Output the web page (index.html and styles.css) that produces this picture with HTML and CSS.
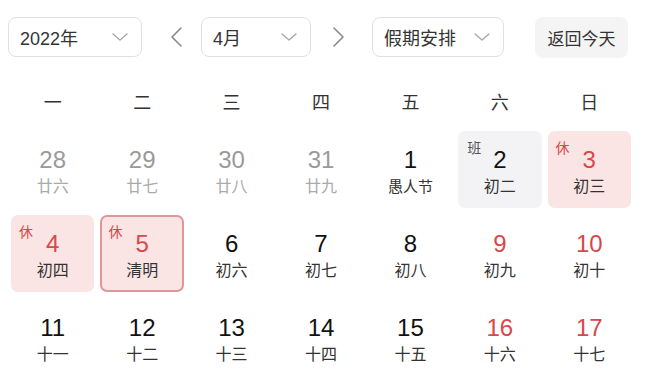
FILE: index.html
```html
<!DOCTYPE html>
<html lang="zh">
<head>
<meta charset="utf-8">
<link rel="stylesheet" href="styles.css">
</head>
<body>
<div class="cal">
  <div class="toolbar">
    <div class="select sel-year"><span>2022年</span><svg class="chev" viewBox="0 0 16 8" width="16" height="8"><path d="M1 1 L8 7 L15 1" /></svg></div>
    <svg class="arrow arrow-prev" viewBox="0 0 12 20" width="12" height="20"><path d="M11 1 L2 10 L11 19" /></svg>
    <div class="select sel-month"><span>4月</span><svg class="chev" viewBox="0 0 16 8" width="16" height="8"><path d="M1 1 L8 7 L15 1" /></svg></div>
    <svg class="arrow arrow-next" viewBox="0 0 12 20" width="12" height="20"><path d="M1 1 L10 10 L1 19" /></svg>
    <div class="select sel-holiday"><span>假期安排</span><svg class="chev" viewBox="0 0 16 8" width="16" height="8"><path d="M1 1 L8 7 L15 1" /></svg></div>
    <div class="today-btn">返回今天</div>
  </div>

  <div class="weekdays">
    <div>一</div><div>二</div><div>三</div><div>四</div><div>五</div><div>六</div><div>日</div>
  </div>

  <div class="grid">
    <div class="cell muted"><div class="num">28</div><div class="lunar">廿六</div></div>
    <div class="cell muted"><div class="num">29</div><div class="lunar">廿七</div></div>
    <div class="cell muted"><div class="num">30</div><div class="lunar">廿八</div></div>
    <div class="cell muted"><div class="num">31</div><div class="lunar">廿九</div></div>
    <div class="cell"><div class="num">1</div><div class="lunar fest">愚人节</div></div>
    <div class="cell work"><span class="tag">班</span><div class="num">2</div><div class="lunar">初二</div></div>
    <div class="cell rest"><span class="tag">休</span><div class="num red">3</div><div class="lunar">初三</div></div>

    <div class="cell rest"><span class="tag">休</span><div class="num red">4</div><div class="lunar">初四</div></div>
    <div class="cell rest selected"><span class="tag">休</span><div class="num red">5</div><div class="lunar">清明</div></div>
    <div class="cell"><div class="num">6</div><div class="lunar">初六</div></div>
    <div class="cell"><div class="num">7</div><div class="lunar">初七</div></div>
    <div class="cell"><div class="num">8</div><div class="lunar">初八</div></div>
    <div class="cell"><div class="num red">9</div><div class="lunar">初九</div></div>
    <div class="cell"><div class="num red">10</div><div class="lunar">初十</div></div>

    <div class="cell"><div class="num">11</div><div class="lunar">十一</div></div>
    <div class="cell"><div class="num">12</div><div class="lunar">十二</div></div>
    <div class="cell"><div class="num">13</div><div class="lunar">十三</div></div>
    <div class="cell"><div class="num">14</div><div class="lunar">十四</div></div>
    <div class="cell"><div class="num">15</div><div class="lunar">十五</div></div>
    <div class="cell"><div class="num red">16</div><div class="lunar">十六</div></div>
    <div class="cell"><div class="num red">17</div><div class="lunar">十七</div></div>
  </div>
</div>
</body>
</html>
```

FILE: styles.css
```css
html, body {
  margin: 0;
  padding: 0;
  background: #ffffff;
  overflow: hidden;
}

body {
  width: 650px;
  height: 383px;
  font-family: "Liberation Sans", "Noto Sans CJK SC", sans-serif;
  color: #222;
}

.cal {
  padding: 17px 0 0 8px;
}

.toolbar {
  display: flex;
  align-items: center;
  height: 40px;
}

.select {
  box-sizing: border-box;
  height: 40px;
  border: 1px solid #e0e0e0;
  border-radius: 8px;
  display: flex;
  align-items: center;
  justify-content: space-between;
  padding: 0 13px 0 11px;
  font-size: 18px;
  color: #333;
}

.sel-year { width: 134px; }
.sel-month { width: 110px; }
.sel-holiday { width: 132px; }

.chev path {
  fill: none;
  stroke: #a8a8a8;
  stroke-width: 1.4;
  stroke-linecap: round;
  stroke-linejoin: round;
}

.arrow path {
  fill: none;
  stroke: #8a8a8a;
  stroke-width: 1.6;
  stroke-linecap: round;
  stroke-linejoin: round;
}

.arrow-prev { margin: 0 19px 0 28px; }
.arrow-next { margin: 0 27px 0 22px; }

.today-btn {
  margin-left: 31px;
  width: 93px;
  height: 41px;
  border-radius: 8px;
  background: #f4f4f4;
  display: flex;
  align-items: center;
  justify-content: center;
  font-size: 17px;
  color: #333;
}

.weekdays {
  display: grid;
  grid-template-columns: repeat(7, 1fr);
  column-gap: 6px;
  width: 620px;
  margin: 34px 0 0 3px;
  font-size: 18px;
  line-height: 24px;
  text-align: center;
  color: #333;
}

.grid {
  display: grid;
  grid-template-columns: repeat(7, 1fr);
  grid-auto-rows: 77px;
  column-gap: 6px;
  row-gap: 7px;
  width: 620px;
  margin: 16px 0 0 3px;
}

.cell {
  position: relative;
  box-sizing: border-box;
  border-radius: 7px;
  padding-top: 16px;
  text-align: center;
}

.num {
  font-size: 24px;
  line-height: 26px;
  color: #111;
}

.lunar {
  margin-top: 4px;
  font-size: 16px;
  line-height: 20px;
  color: #333;
}

.lunar.fest { font-size: 15px; }

.red { color: #d9474a; }

.muted .num { color: #9a9a9a; }
.muted .lunar { color: #aaaaaa; }

.work { background: #f3f3f5; }
.rest { background: #fbe4e4; }

.selected {
  border: 2px solid #e0979a;
  padding-top: 14px;
}

.tag {
  position: absolute;
  top: 10px;
  left: 9px;
  font-size: 14px;
  line-height: 14px;
  color: #555;
}

.rest .tag { color: #d9474a; left: 8px; }
.selected .tag { top: 8px; left: 6px; }
```
